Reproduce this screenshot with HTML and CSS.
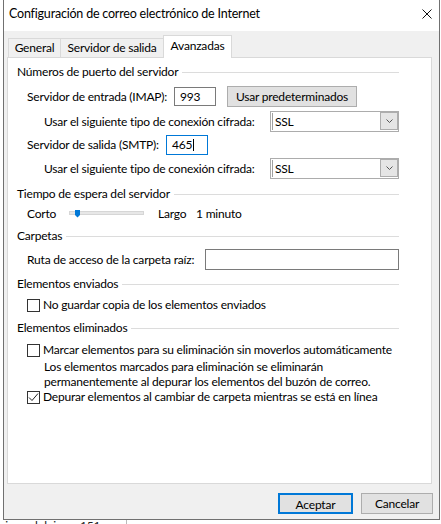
FILE: index.html
```html
<!DOCTYPE html>
<html lang="es">
<head>
<meta charset="utf-8">
<title>Configuración de correo electrónico de Internet</title>
<link rel="stylesheet" href="styles.css">
</head>
<body>
<div class="window">
  <div class="titlebar">
    <span class="title">Configuración de correo electrónico de Internet</span>
    <svg class="close" width="10" height="10" viewBox="0 0 10 10"><path d="M0.5 0.5 L9.5 9.5 M9.5 0.5 L0.5 9.5" stroke="#111" stroke-width="1" fill="none"/></svg>
  </div>
  <div class="client">
    <div class="tabs">
      <div class="tab tab-general">General</div>
      <div class="tab tab-outgoing">Servidor de salida</div>
      <div class="tab tab-active">Avanzadas</div>
    </div>
    <div class="panel">
      <div class="group-head">Números de puerto del servidor</div>
      <div class="field-row row-imap mt6">
        <span class="label label-imap">Servidor de entrada (IMAP):</span>
        <div class="textbox port">993</div>
        <button class="btn btn-defaults">Usar predeterminados</button>
      </div>
      <div class="field-row sub-row row-combo mt4">
        <span class="label label-enc">Usar el siguiente tipo de conexión cifrada:</span>
        <div class="combo">
          <span class="combo-text">SSL</span>
          <span class="combo-arrow"><svg width="7" height="4" viewBox="0 0 7 4"><path d="M0.5 0.5 L3.5 3.5 L6.5 0.5" stroke="#555" stroke-width="1" fill="none"/></svg></span>
        </div>
      </div>
      <div class="field-row row-smtp mt3">
        <span class="label label-smtp">Servidor de salida (SMTP):</span>
        <div class="textbox port focused">465<span class="caret"></span></div>
      </div>
      <div class="field-row sub-row row-combo mt3">
        <span class="label label-enc">Usar el siguiente tipo de conexión cifrada:</span>
        <div class="combo">
          <span class="combo-text">SSL</span>
          <span class="combo-arrow"><svg width="7" height="4" viewBox="0 0 7 4"><path d="M0.5 0.5 L3.5 3.5 L6.5 0.5" stroke="#555" stroke-width="1" fill="none"/></svg></span>
        </div>
      </div>

      <div class="group-head mt7">Tiempo de espera del servidor</div>
      <div class="field-row row-line mt4">
        <span class="label label-short">Corto</span>
        <svg class="slider" width="75" height="16" viewBox="0 0 75 16">
          <rect x="0.5" y="5.5" width="74" height="3" fill="#e7e7e7" stroke="#d6d6d6"/>
          <path d="M6 4 H11 V9 L8.5 11.5 L6 9 Z" fill="#0078d7"/>
        </svg>
        <span class="label label-long">Largo</span>
        <span class="label">1 minuto</span>
      </div>

      <div class="group-head mt6">Carpetas</div>
      <div class="field-row row-field mt5">
        <span class="label label-root">Ruta de acceso de la carpeta raíz:</span>
        <div class="textbox wide"></div>
      </div>

      <div class="group-head mt6">Elementos enviados</div>
      <div class="field-row row-line mt5">
        <span class="checkbox"></span>
        <span class="label">No guardar copia de los elementos enviados</span>
      </div>

      <div class="group-head mt7">Elementos eliminados</div>
      <div class="field-row row-line mt6">
        <span class="checkbox"></span>
        <span class="label">Marcar elementos para su eliminación sin moverlos automáticamente</span>
      </div>
      <div class="desc mt2">
        <div class="desc-line">Los elementos marcados para eliminación se eliminarán</div>
        <div class="desc-line">permanentemente al depurar los elementos del buzón de correo.</div>
      </div>
      <div class="field-row row-line">
        <span class="checkbox"><svg width="11" height="11" viewBox="0 0 11 11"><path d="M1 5.5 L4 8.5 L10 1.5" stroke="#222" stroke-width="1" fill="none"/></svg></span>
        <span class="label">Depurar elementos al cambiar de carpeta mientras se está en línea</span>
      </div>
    </div>
    <div class="footer">
      <button class="btn btn-ok">Aceptar</button>
      <button class="btn btn-cancel">Cancelar</button>
    </div>
  </div>
</div>
<div class="behind">
  <span class="behind-a">iciones lolui</span>
  <span class="behind-b">151</span>
  <span class="behind-rule"></span>
</div>
</body>
</html>
```
FILE: styles.css
```css
* { box-sizing: border-box; }
html, body { margin: 0; padding: 0; }
body {
  width: 441px;
  height: 524px;
  overflow: hidden;
  background: #ffffff;
  font-family: Lato, "Noto Sans", sans-serif;
  font-size: 12px;
  letter-spacing: -0.2px;
  color: #000;
}
.window {
  margin-left: 3px;
  width: 437px;
  height: 520px;
  border: 1px solid #707070;
  border-top: none;
  display: flex;
  flex-direction: column;
}
.titlebar {
  height: 31px;
  flex: none;
  background: #fff;
  display: flex;
  align-items: center;
  justify-content: space-between;
  padding: 0 7px 3px 5px;
}
.title { font-size: 12.5px; line-height: 16px; }
.close { display: block; }
.client {
  flex: 1;
  background: #f0f0f0;
  display: flex;
  flex-direction: column;
  padding-top: 4px;
}
.tabs {
  display: flex;
  align-items: flex-end;
  height: 22px;
  margin-left: 4px;
}
.tab {
  height: 19px;
  border-top: 1px solid #d9d9d9;
  text-align: center;
  line-height: 17px;
  white-space: nowrap;
}
.tab-general { width: 53px; border-left: 1px solid #d9d9d9; border-right: 1px solid #d9d9d9; }
.tab-outgoing { width: 102px; }
.tab-active {
  width: 69px;
  height: 23px;
  margin-bottom: -1px;
  background: #fff;
  border: 1px solid #d9d9d9;
  border-bottom: none;
  line-height: 20px;
  position: relative;
  z-index: 1;
}
.panel {
  margin-left: 3px;
  width: 425px;
  height: 427px;
  flex: none;
  border: 1px solid #d9d9d9;
  background: #fff;
  padding: 6px 32px 0 9px;
}
.group-head {
  display: flex;
  align-items: center;
  height: 16px;
  line-height: 16px;
  white-space: nowrap;
}
.group-head::after {
  content: "";
  flex: 1;
  border-top: 1px solid #dcdcdc;
  margin-left: 4px;
}
.mt2 { margin-top: 2px; }
.mt3 { margin-top: 3px; }
.mt4 { margin-top: 4px; }
.mt5 { margin-top: 5px; }
.mt6 { margin-top: 6px; }
.mt7 { margin-top: 7px; }
.field-row {
  display: flex;
  align-items: center;
  padding-left: 10px;
  white-space: nowrap;
}
.sub-row { padding-left: 27px; }
.row-imap { height: 21px; }
.row-combo { height: 21px; }
.row-smtp { height: 20px; }
.row-line { height: 16px; }
.row-field { height: 21px; }
.label { line-height: 16px; }
.label-imap { width: 147px; }
.label-smtp { width: 139px; }
.label-enc { width: 226px; }
.label-root { width: 178px; }
.label-short { width: 42px; }
.label-long { width: 38px; margin-left: 14px; }
.textbox {
  height: 19px;
  border: 1px solid #7a7a7a;
  background: #fff;
  padding-left: 5px;
  line-height: 17px;
}
.port { width: 42px; }
.focused { height: 20px; border-color: #0078d7; line-height: 18px; display: flex; align-items: center; }
.caret { display: inline-block; width: 1px; height: 12px; background: #000; margin-left: 1px; }
.wide { width: 194px; height: 21px; }
.btn {
  height: 21px;
  font: inherit;
  letter-spacing: inherit;
  color: #000;
  background: #e1e1e1;
  border: 1px solid #adadad;
  padding: 0;
  line-height: 19px;
}
.btn-defaults { width: 130px; margin-left: 11px; }
.combo {
  width: 129px;
  height: 21px;
  border: 1px solid #acacac;
  background: #fff;
  display: flex;
}
.combo-text {
  flex: 1;
  margin: 1px 0 1px 1px;
  border-left: 1px solid #a0a0a0;
  padding-left: 2px;
  line-height: 17px;
}
.combo-arrow {
  width: 18px;
  height: 18px;
  border: 1px solid #adadad;
  background: #e5e5e5;
  display: flex;
  align-items: center;
  justify-content: center;
}
.combo-arrow svg { display: block; }
.slider { display: block; flex: none; }
.checkbox {
  width: 13px;
  height: 13px;
  flex: none;
  border: 1px solid #333;
  background: #fff;
  margin-right: 3px;
  display: flex;
  align-items: center;
  justify-content: center;
}
.checkbox svg { display: block; }
.desc {
  padding-left: 27px;
  white-space: nowrap;
}
.desc-line { height: 14.5px; line-height: 14.5px; }
.footer {
  display: flex;
  justify-content: flex-end;
  gap: 8px;
  padding-right: 6px;
  margin-top: 9px;
}
.btn-ok { width: 75px; border: 2px solid #0078d7; }
.btn-cancel { width: 72px; }
.behind {
  display: flex;
  height: 12px;
  line-height: 12px;
  font-size: 12px;
  color: #222;
  white-space: nowrap;
}
.behind-a { width: 83px; margin-left: -3px; }
.behind-b { width: 46px; }
.behind-rule { border-left: 1px solid #bbb; }
```
